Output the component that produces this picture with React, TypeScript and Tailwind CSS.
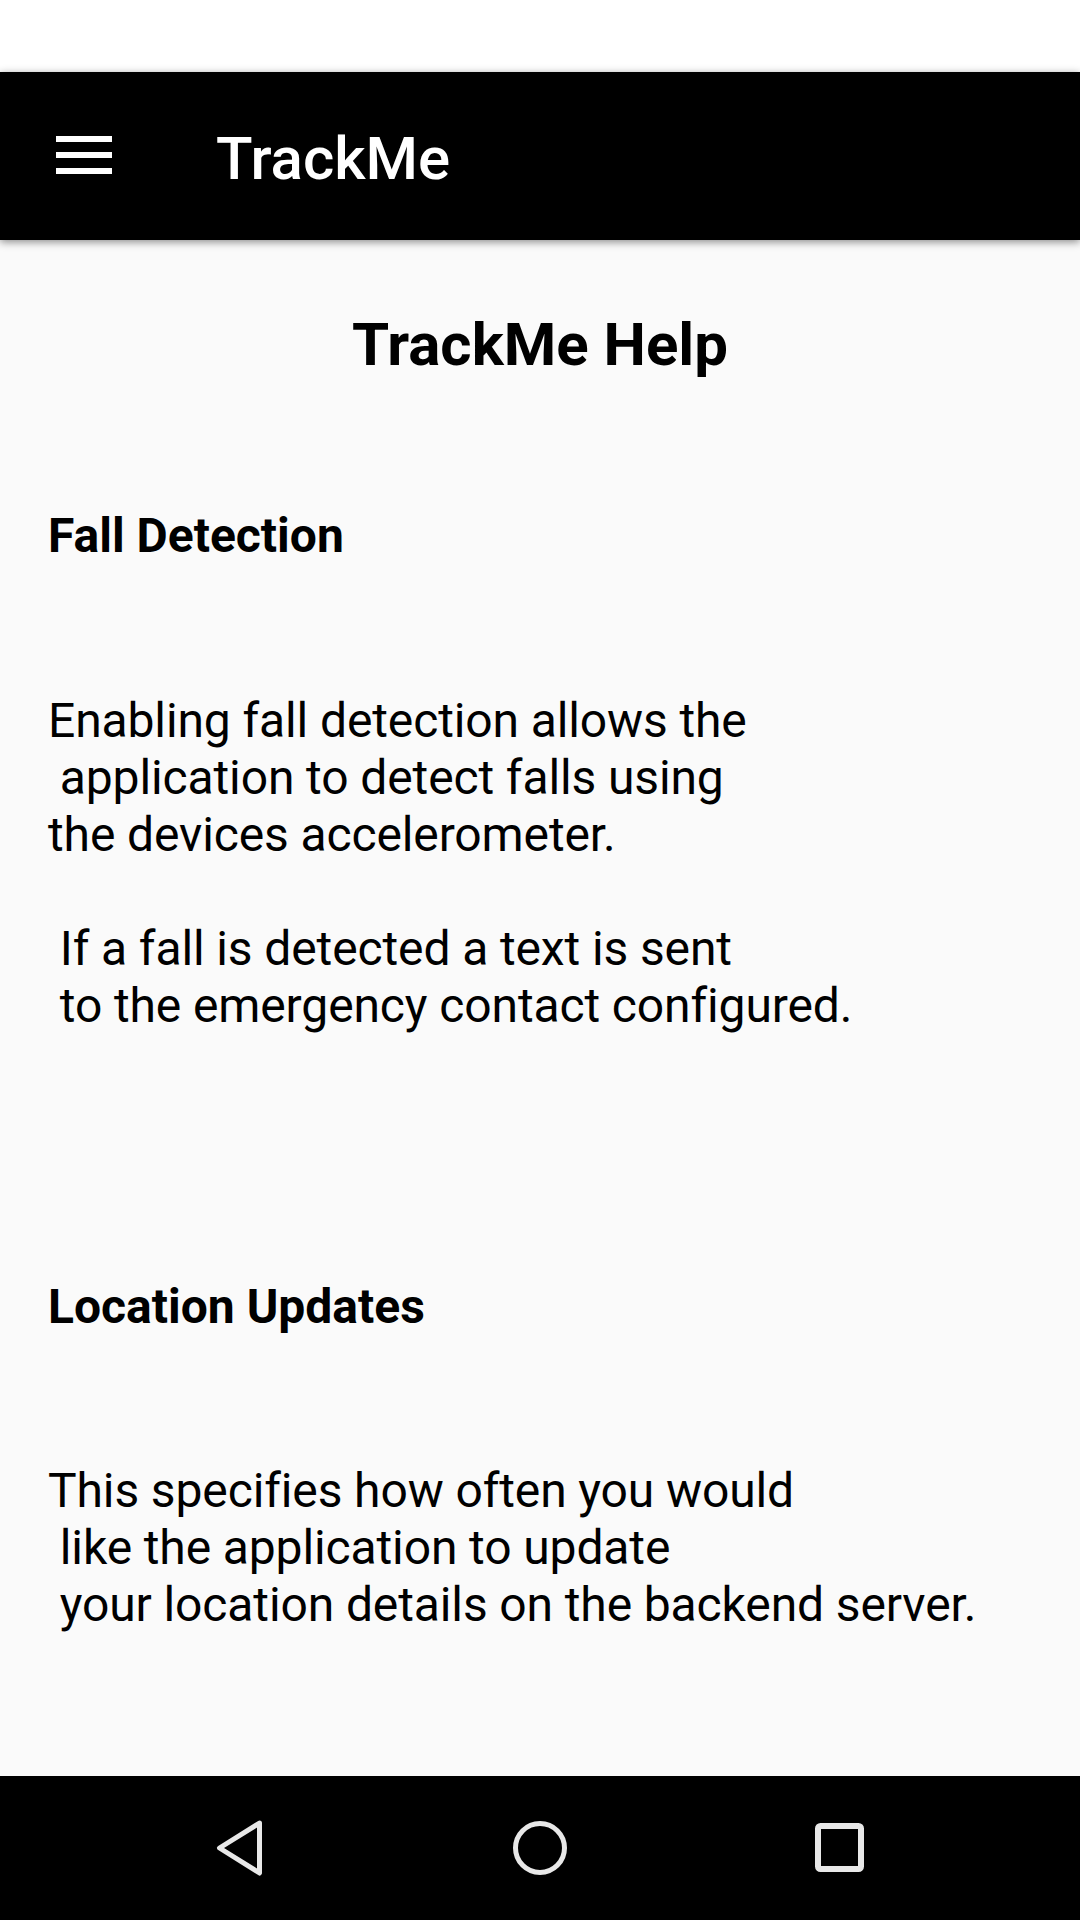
import React from "react";

const font = { fontFamily: "Roboto, 'Noto Sans', sans-serif" };

function Lines({ lines }: { lines: string[] }) {
  return (
    <div className="text-[48px] leading-[57px] tracking-[-0.12px] text-black whitespace-pre">
      {lines.map((l, i) => (
        <div key={i} className="h-[57px]">
          {l}
        </div>
      ))}
    </div>
  );
}

export default function App() {
  return (
    <div className="w-[1080px] h-[1920px] flex flex-col bg-[#fafafa] overflow-hidden" style={font}>
      <div className="h-[72px] bg-white shrink-0" />
      <div className="relative z-10 h-[168px] bg-black shrink-0 flex items-start shadow-[0_2px_8px_rgba(0,0,0,0.45)]">
        <div className="mt-[64px] ml-[56px] w-[56px] flex flex-col gap-[10px]">
          <div className="h-[6px] bg-white" />
          <div className="h-[6px] bg-white" />
          <div className="h-[6px] bg-white" />
        </div>
        <div className="ml-[104px] mt-[52px] text-[60px] leading-[70px] font-medium text-white">TrackMe</div>
      </div>
      <div className="flex-1 px-[48px]">
        <div className="mt-[70px] text-center text-[60px] leading-[70px] font-bold text-black">TrackMe Help</div>
        <div className="mt-[127px] text-[48px] leading-[57px] font-bold text-black">Fall Detection</div>
        <div className="mt-[128px]">
          <Lines
            lines={[
              "Enabling fall detection allows the",
              " application to detect falls using",
              "the devices accelerometer.",
              "",
              " If a fall is detected a text is sent",
              " to the emergency contact configured.",
            ]}
          />
        </div>
        <div className="mt-[244px] text-[48px] leading-[57px] font-bold text-black">Location Updates</div>
        <div className="mt-[127px]">
          <Lines
            lines={[
              "This specifies how often you would",
              " like the application to update",
              " your location details on the backend server.",
            ]}
          />
        </div>
      </div>
      <div className="h-[144px] bg-black shrink-0 flex items-center justify-center gap-[240px]">
        <svg width="60" height="60" viewBox="0 0 60 60">
          <polygon
            points="49.5,5 9.5,30 49.5,55"
            fill="none"
            stroke="#e8e8e8"
            strokeWidth="5"
            strokeLinejoin="round"
          />
        </svg>
        <svg width="60" height="60" viewBox="0 0 60 60">
          <circle cx="30" cy="30" r="24.5" fill="none" stroke="#e8e8e8" strokeWidth="5" />
        </svg>
        <svg width="60" height="60" viewBox="0 0 60 60">
          <rect x="8" y="8" width="43" height="43" rx="2.5" fill="none" stroke="#e8e8e8" strokeWidth="6" />
        </svg>
      </div>
    </div>
  );
}
